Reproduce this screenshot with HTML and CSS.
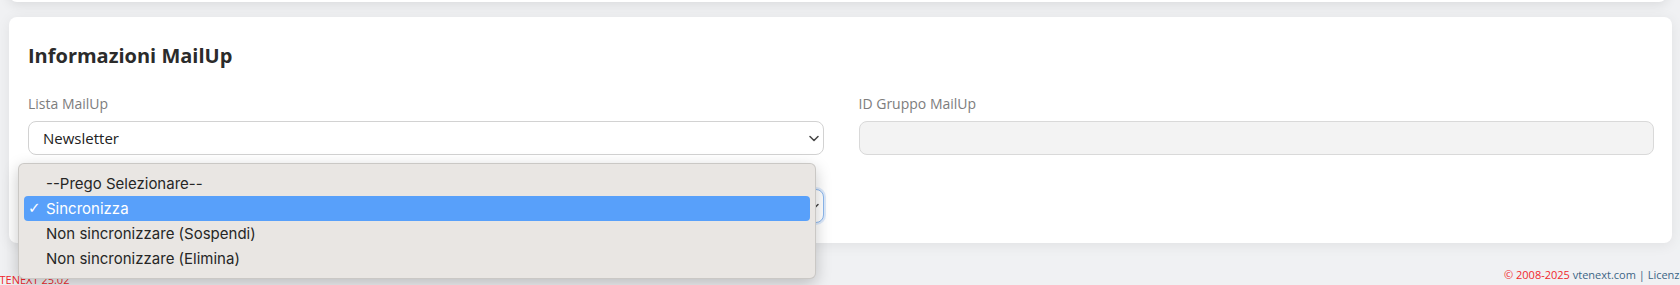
FILE: index.html
```html
<!DOCTYPE html>
<html lang="it">
<head>
<meta charset="utf-8">
<title>Informazioni MailUp</title>
<link rel="stylesheet" href="styles.css">
</head>
<body>
<div class="page">
  <div class="prev-card"></div>
  <section class="card">
    <h2 class="card-title">Informazioni MailUp</h2>
    <div class="grid">
      <div class="field">
        <label class="field-label">Lista MailUp</label>
        <div class="select">
          <span class="select-value">Newsletter</span>
          <svg class="chev" width="10" height="7" viewBox="0 0 10 7"><path d="M1 1.5 L5 5.5 L9 1.5" fill="none" stroke="#444" stroke-width="1.5" stroke-linecap="round" stroke-linejoin="round"/></svg>
        </div>
      </div>
      <div class="field">
        <label class="field-label">ID Gruppo MailUp</label>
        <div class="input readonly"></div>
      </div>
      <div class="field field-open">
        <label class="field-label">Stato sincronizzazione</label>
        <div class="select focused">
          <span class="select-value">Sincronizza</span>
          <svg class="chev" width="10" height="7" viewBox="0 0 10 7"><path d="M1 1.5 L5 5.5 L9 1.5" fill="none" stroke="#444" stroke-width="1.5" stroke-linecap="round" stroke-linejoin="round"/></svg>
        </div>
        <ul class="menu">
          <li class="opt">--Prego Selezionare--</li>
          <li class="opt selected"><span class="check">✓</span>Sincronizza</li>
          <li class="opt">Non sincronizzare (Sospendi)</li>
          <li class="opt">Non sincronizzare (Elimina)</li>
        </ul>
      </div>
      <div class="field"></div>
    </div>
  </section>
  <footer class="footer">
    <span class="version">VTENEXT 25.02</span>
    <span class="copy"><span class="red">© 2008-2025</span> <span class="link">vtenext.com</span> <span class="sep">|</span> <span class="link">Licenza</span></span>
  </footer>
</div>
</body>
</html>
```

FILE: styles.css
```css
html, body {
  margin: 0;
  padding: 0;
  height: 285px;
  overflow: hidden;
  background: #f0f1f3;
  font-family: "Open Sans", "Noto Sans", sans-serif;
}

.page {
  padding: 0 8px 0 9px;
}

.prev-card {
  height: 40px;
  margin-top: -38px;
  margin-right: 5px;
  background: #ffffff;
  border-radius: 8px;
  box-shadow: 0 3px 12px rgba(0, 0, 0, 0.09);
}

.card {
  margin-top: 15px;
  background: #ffffff;
  border-radius: 8px;
  box-shadow: 0 2px 14px rgba(0, 0, 0, 0.07);
  padding: 25px 18px 20px 19px;
}

.card-title {
  margin: 0;
  font-size: 20px;
  line-height: 28px;
  font-weight: 700;
  color: #2b2b2b;
}

.grid {
  margin-top: 24px;
  display: grid;
  grid-template-columns: 1fr 1fr;
  column-gap: 35px;
  row-gap: 7px;
}

.field {
  display: flex;
  flex-direction: column;
  gap: 7px;
}

.field-open {
  position: relative;
}

.field-label {
  font-size: 14px;
  line-height: 20px;
  color: #7d7d7d;
}

.select {
  height: 34px;
  box-sizing: border-box;
  border: 1px solid #d2d2d2;
  border-radius: 8px;
  background: #ffffff;
  display: flex;
  align-items: center;
  justify-content: space-between;
  padding: 0 4px 0 14px;
}

.select.focused {
  border-color: #8cb8ee;
  box-shadow: 0 0 0 2px rgba(120, 170, 240, 0.25);
}

.select-value {
  font-size: 15px;
  color: #222222;
}

.input {
  height: 34px;
  box-sizing: border-box;
  border: 1px solid #d9d9d9;
  border-radius: 8px;
}

.input.readonly {
  background: #f3f3f3;
}

.menu {
  position: absolute;
  left: -10px;
  top: 1px;
  width: 798px;
  box-sizing: border-box;
  margin: 0;
  padding: 7px 5px;
  list-style: none;
  background: #e9e6e3;
  border: 1px solid rgba(0, 0, 0, 0.13);
  border-radius: 6px;
  box-shadow: 0 5px 16px rgba(0, 0, 0, 0.22);
  font-family: "Inter", "Liberation Sans", sans-serif;
  font-size: 15px;
  z-index: 2;
}

.opt {
  height: 25px;
  line-height: 25px;
  padding-left: 22px;
  color: #262626;
  border-radius: 4px;
  position: relative;
}

.opt.selected {
  background: #58a0fa;
  color: #ffffff;
}

.check {
  position: absolute;
  left: 4px;
  top: 0;
  font-family: "DejaVu Sans", sans-serif;
  font-size: 15px;
}

.footer {
  margin-top: 24px;
  display: flex;
  justify-content: space-between;
  align-items: flex-start;
  font-size: 11px;
  line-height: 16px;
  white-space: nowrap;
}

.version {
  margin-left: -16px;
  margin-top: 5px;
  color: #f0282d;
  font-size: 11px;
}

.copy {
  flex-shrink: 0;
  width: 220px;
  margin-right: -52px;
}

.red {
  color: #f0282d;
}

.link {
  color: #3c6585;
}

.sep {
  color: #3c6585;
}
```
